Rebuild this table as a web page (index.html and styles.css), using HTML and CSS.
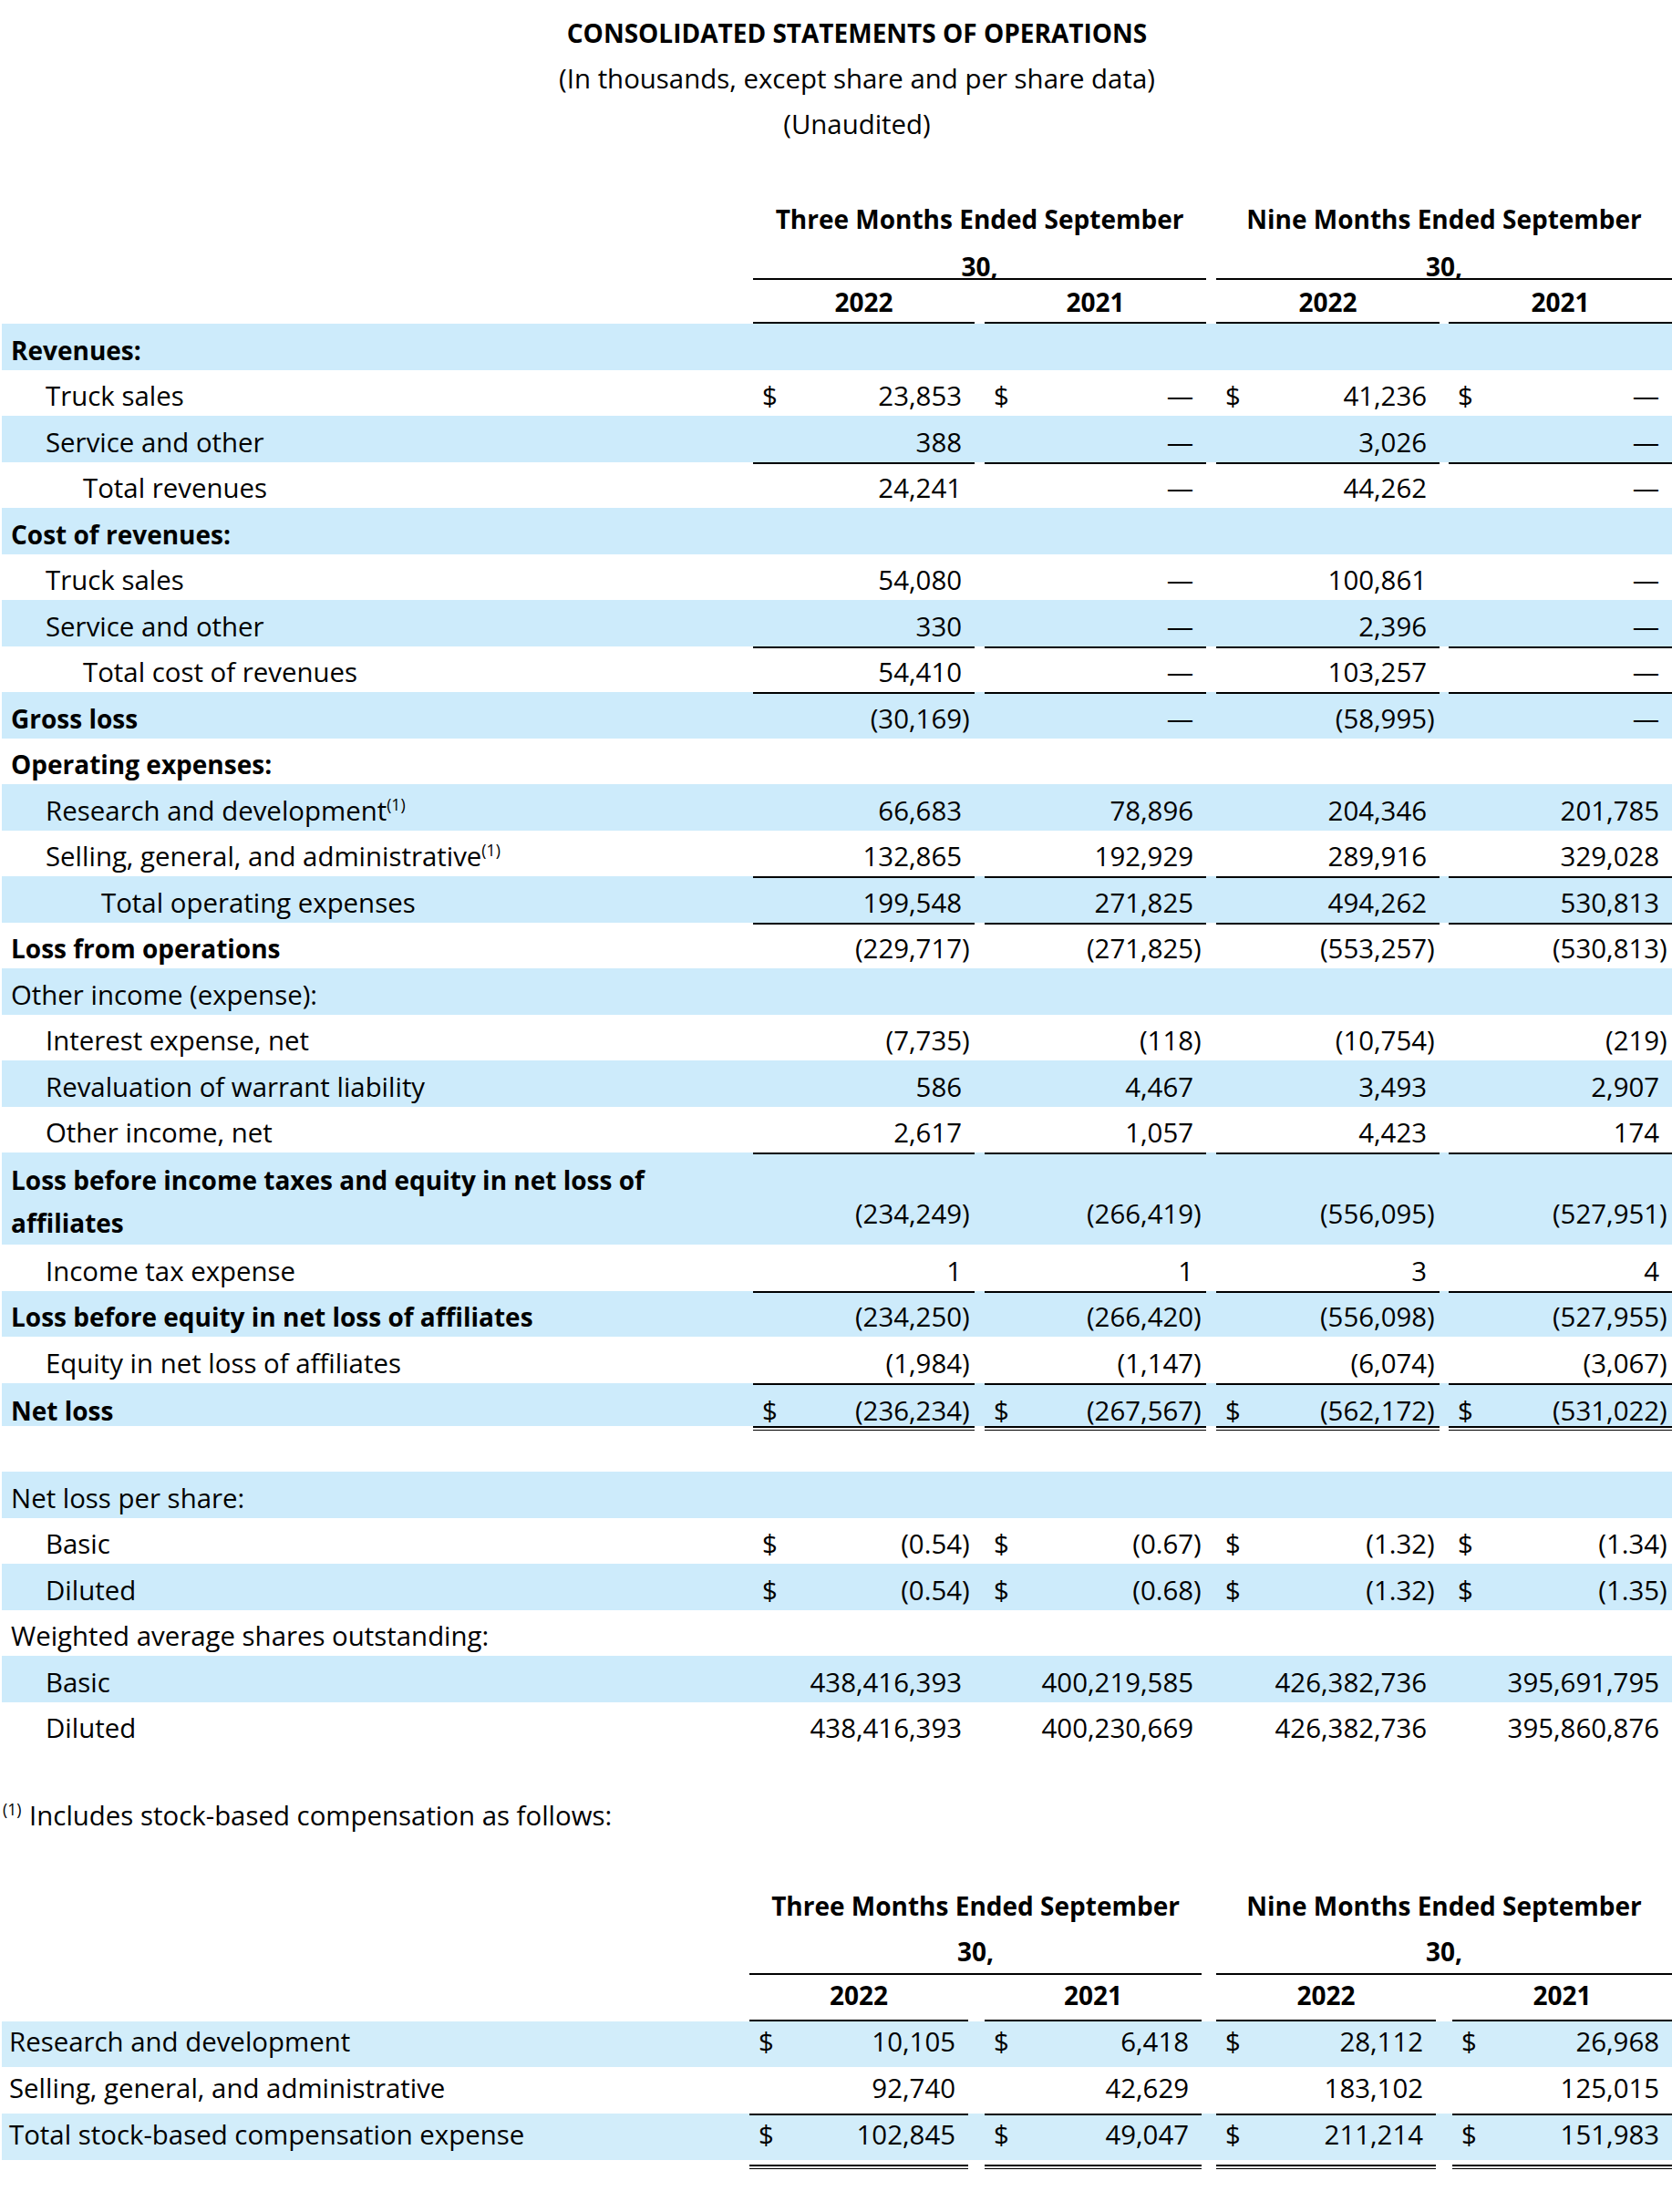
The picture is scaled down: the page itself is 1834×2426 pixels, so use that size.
FILE: index.html
```html
<!DOCTYPE html>
<html lang="en">
<head>
<meta charset="utf-8">
<title>Consolidated Statements of Operations</title>
<link rel="stylesheet" href="styles.css">
</head>
<body>
<div class="head">
  <div class="t">CONSOLIDATED STATEMENTS OF OPERATIONS</div>
  <div>(In thousands, except share and per share data)</div>
  <div>(Unaudited)</div>
</div>

<table class="fs">
  <colgroup>
    <col class="cl"><col class="c1"><col class="cg1"><col class="c2"><col class="cg2"><col class="c3"><col class="cg3"><col class="c4">
  </colgroup>
  <tr class="h1">
    <th></th>
    <th colspan="3" class="grp"><div class="clip">Three Months Ended September<br>30,</div></th>
    <th></th>
    <th colspan="3" class="grp"><div class="clip">Nine Months Ended September<br>30,</div></th>
  </tr>
  <tr class="yr">
    <th></th><th class="y">2022</th><th></th><th class="y">2021</th><th></th><th class="y">2022</th><th></th><th class="y">2021</th>
  </tr>
  <tr class="r b"><td class="l bold">Revenues:</td><td class="v"></td><td></td><td class="v"></td><td></td><td class="v"></td><td></td><td class="v"></td></tr>
  <tr class="r"><td class="l i1">Truck sales</td><td class="v"><span class="d">$</span>23,853</td><td></td><td class="v"><span class="d">$</span>—</td><td></td><td class="v"><span class="d">$</span>41,236</td><td></td><td class="v"><span class="d">$</span>—</td></tr>
  <tr class="r b"><td class="l i1">Service and other</td><td class="v">388</td><td></td><td class="v">—</td><td></td><td class="v">3,026</td><td></td><td class="v">—</td></tr>
  <tr class="r ln"><td class="l i2">Total revenues</td><td class="v">24,241</td><td></td><td class="v">—</td><td></td><td class="v">44,262</td><td></td><td class="v">—</td></tr>
  <tr class="r b"><td class="l bold">Cost of revenues:</td><td class="v"></td><td></td><td class="v"></td><td></td><td class="v"></td><td></td><td class="v"></td></tr>
  <tr class="r"><td class="l i1">Truck sales</td><td class="v">54,080</td><td></td><td class="v">—</td><td></td><td class="v">100,861</td><td></td><td class="v">—</td></tr>
  <tr class="r b"><td class="l i1">Service and other</td><td class="v">330</td><td></td><td class="v">—</td><td></td><td class="v">2,396</td><td></td><td class="v">—</td></tr>
  <tr class="r ln"><td class="l i2">Total cost of revenues</td><td class="v">54,410</td><td></td><td class="v">—</td><td></td><td class="v">103,257</td><td></td><td class="v">—</td></tr>
  <tr class="r b ln"><td class="l bold">Gross loss</td><td class="v">(30,169<span class="p">)</span></td><td></td><td class="v">—</td><td></td><td class="v">(58,995<span class="p">)</span></td><td></td><td class="v">—</td></tr>
  <tr class="r"><td class="l bold">Operating expenses:</td><td class="v"></td><td></td><td class="v"></td><td></td><td class="v"></td><td></td><td class="v"></td></tr>
  <tr class="r b"><td class="l i1">Research and development<sup>(1)</sup></td><td class="v">66,683</td><td></td><td class="v">78,896</td><td></td><td class="v">204,346</td><td></td><td class="v">201,785</td></tr>
  <tr class="r"><td class="l i1">Selling, general, and administrative<sup>(1)</sup></td><td class="v">132,865</td><td></td><td class="v">192,929</td><td></td><td class="v">289,916</td><td></td><td class="v">329,028</td></tr>
  <tr class="r b ln"><td class="l i3">Total operating expenses</td><td class="v">199,548</td><td></td><td class="v">271,825</td><td></td><td class="v">494,262</td><td></td><td class="v">530,813</td></tr>
  <tr class="r ln"><td class="l bold">Loss from operations</td><td class="v">(229,717<span class="p">)</span></td><td></td><td class="v">(271,825<span class="p">)</span></td><td></td><td class="v">(553,257<span class="p">)</span></td><td></td><td class="v">(530,813<span class="p">)</span></td></tr>
  <tr class="r b"><td class="l">Other income (expense):</td><td class="v"></td><td></td><td class="v"></td><td></td><td class="v"></td><td></td><td class="v"></td></tr>
  <tr class="r"><td class="l i1">Interest expense, net</td><td class="v">(7,735<span class="p">)</span></td><td></td><td class="v">(118<span class="p">)</span></td><td></td><td class="v">(10,754<span class="p">)</span></td><td></td><td class="v">(219<span class="p">)</span></td></tr>
  <tr class="r b"><td class="l i1">Revaluation of warrant liability</td><td class="v">586</td><td></td><td class="v">4,467</td><td></td><td class="v">3,493</td><td></td><td class="v">2,907</td></tr>
  <tr class="r"><td class="l i1">Other income, net</td><td class="v">2,617</td><td></td><td class="v">1,057</td><td></td><td class="v">4,423</td><td></td><td class="v">174</td></tr>
  <tr class="r2 b ln"><td class="l bold wrap">Loss before income taxes and equity in net loss of<br>affiliates</td><td class="v">(234,249<span class="p">)</span></td><td></td><td class="v">(266,419<span class="p">)</span></td><td></td><td class="v">(556,095<span class="p">)</span></td><td></td><td class="v">(527,951<span class="p">)</span></td></tr>
  <tr class="r"><td class="l i1">Income tax expense</td><td class="v">1</td><td></td><td class="v">1</td><td></td><td class="v">3</td><td></td><td class="v">4</td></tr>
  <tr class="r b ln"><td class="l bold">Loss before equity in net loss of affiliates</td><td class="v">(234,250<span class="p">)</span></td><td></td><td class="v">(266,420<span class="p">)</span></td><td></td><td class="v">(556,098<span class="p">)</span></td><td></td><td class="v">(527,955<span class="p">)</span></td></tr>
  <tr class="r"><td class="l i1">Equity in net loss of affiliates</td><td class="v">(1,984<span class="p">)</span></td><td></td><td class="v">(1,147<span class="p">)</span></td><td></td><td class="v">(6,074<span class="p">)</span></td><td></td><td class="v">(3,067<span class="p">)</span></td></tr>
  <tr class="net b ln"><td class="l bold">Net loss</td><td class="v"><span class="d">$</span>(236,234<span class="p">)</span></td><td></td><td class="v"><span class="d">$</span>(267,567<span class="p">)</span></td><td></td><td class="v"><span class="d">$</span>(562,172<span class="p">)</span></td><td></td><td class="v"><span class="d">$</span>(531,022<span class="p">)</span></td></tr>
  <tr class="dbl"><td></td><td class="v"></td><td></td><td class="v"></td><td></td><td class="v"></td><td></td><td class="v"></td></tr>
  <tr class="blank"><td></td><td></td><td></td><td></td><td></td><td></td><td></td><td></td></tr>
  <tr class="r b"><td class="l">Net loss per share:</td><td class="v"></td><td></td><td class="v"></td><td></td><td class="v"></td><td></td><td class="v"></td></tr>
  <tr class="r"><td class="l i1">Basic</td><td class="v"><span class="d">$</span>(0.54<span class="p">)</span></td><td></td><td class="v"><span class="d">$</span>(0.67<span class="p">)</span></td><td></td><td class="v"><span class="d">$</span>(1.32<span class="p">)</span></td><td></td><td class="v"><span class="d">$</span>(1.34<span class="p">)</span></td></tr>
  <tr class="r b"><td class="l i1">Diluted</td><td class="v"><span class="d">$</span>(0.54<span class="p">)</span></td><td></td><td class="v"><span class="d">$</span>(0.68<span class="p">)</span></td><td></td><td class="v"><span class="d">$</span>(1.32<span class="p">)</span></td><td></td><td class="v"><span class="d">$</span>(1.35<span class="p">)</span></td></tr>
  <tr class="r"><td class="l">Weighted average shares outstanding:</td><td class="v"></td><td></td><td class="v"></td><td></td><td class="v"></td><td></td><td class="v"></td></tr>
  <tr class="r b"><td class="l i1">Basic</td><td class="v">438,416,393</td><td></td><td class="v">400,219,585</td><td></td><td class="v">426,382,736</td><td></td><td class="v">395,691,795</td></tr>
  <tr class="r"><td class="l i1">Diluted</td><td class="v">438,416,393</td><td></td><td class="v">400,230,669</td><td></td><td class="v">426,382,736</td><td></td><td class="v">395,860,876</td></tr>
</table>

<p class="fn"><sup>(1)</sup> Includes stock-based compensation as follows:</p>

<table class="fs2">
  <colgroup>
    <col class="cl"><col class="c1"><col class="cg1"><col class="c2"><col class="cg2"><col class="c3"><col class="cg3"><col class="c4">
  </colgroup>
  <tr class="h1">
    <th></th>
    <th colspan="3" class="grp"><div class="hd">Three Months Ended September<br>30,</div></th>
    <th></th>
    <th colspan="3" class="grp"><div class="hd">Nine Months Ended September<br>30,</div></th>
  </tr>
  <tr class="yr">
    <th></th><th class="y">2022</th><th></th><th class="y">2021</th><th></th><th class="y">2022</th><th></th><th class="y">2021</th>
  </tr>
  <tr class="s1 b"><td class="l">Research and development</td><td class="v"><span class="d">$</span>10,105</td><td></td><td class="v"><span class="d">$</span>6,418</td><td></td><td class="v"><span class="d">$</span>28,112</td><td></td><td class="v"><span class="d">$</span>26,968</td></tr>
  <tr class="s2"><td class="l">Selling, general, and administrative</td><td class="v">92,740</td><td></td><td class="v">42,629</td><td></td><td class="v">183,102</td><td></td><td class="v">125,015</td></tr>
  <tr class="s2 b ln"><td class="l">Total stock-based compensation expense</td><td class="v"><span class="d">$</span>102,845</td><td></td><td class="v"><span class="d">$</span>49,047</td><td></td><td class="v"><span class="d">$</span>211,214</td><td></td><td class="v"><span class="d">$</span>151,983</td></tr>
  <tr class="gap"><td></td><td></td><td></td><td></td><td></td><td></td><td></td><td></td></tr>
  <tr class="dbl"><td></td><td class="v"></td><td></td><td class="v"></td><td></td><td class="v"></td><td></td><td class="v"></td></tr>
</table>
</body>
</html>
```
FILE: styles.css
```css
* { box-sizing: border-box; }

body {
  margin: 0;
  font-family: "Open Sans", "Liberation Sans", sans-serif;
  font-size: 29.4px;
  color: #000;
  background: #fff;
}

.head {
  margin-top: 11px;
  padding-left: 46px;
  text-align: center;
  line-height: 50px;
}
.head .t { font-weight: 700; font-size: 28px; }

table {
  border-collapse: separate;
  border-spacing: 0;
  table-layout: fixed;
  margin-left: 2px;
  width: 1832px;
}
td, th { padding: 0; white-space: nowrap; }
th { font-weight: 700; font-size: 28px; }

.bold { font-weight: 700; font-size: 28px; }

/* first statement */
.fs { margin-top: 53px; }
.fs .cl { width: 824px; }
.fs .c1 { width: 243px; }
.fs .cg1 { width: 11px; }
.fs .c2 { width: 243px; }
.fs .cg2 { width: 11px; }
.fs .c3 { width: 245px; }
.fs .cg3 { width: 10px; }
.fs .c4 { width: 245px; }

.h1 th { vertical-align: top; text-align: center; }
.fs .h1 { height: 93px; }
.fs .clip { height: 91px; line-height: 52px; }
.grp {
  background: linear-gradient(#000, #000) bottom / 100% 2px no-repeat;
}

.yr th { vertical-align: bottom; line-height: 44px; }
.fs .yr { height: 48px; }
.fs .yr th { padding-bottom: 2px; }
.y { background: linear-gradient(#000, #000) bottom / 100% 2px no-repeat; }

td { vertical-align: bottom; line-height: 44px; }
.fs tr.r { height: 50.5px; }
.fs tr.r2 { height: 101px; }
.fs tr.r2 td.l { line-height: 47px; }
.fs tr.r2 td.v { padding-bottom: 12px; }
.fs tr.net { height: 47.5px; }
.fs tr.net td { line-height: 34px; }
.fs tr.blank { height: 44px; }

td.l { padding-left: 10px; }
td.l.i1 { padding-left: 48px; }
td.l.i2 { padding-left: 89px; }
td.l.i3 { padding-left: 109px; }

td.v { text-align: right; padding-left: 10px; padding-right: 14px; }
.d { float: left; }
.p { margin-right: -0.296em; }

tr.b { background-color: #cdebfb; }
tr.ln td.v { background: linear-gradient(#000, #000) top / 100% 2px no-repeat; }

tr.dbl { height: 6px; }
tr.dbl td { line-height: 0; font-size: 0; height: 6px; }
tr.dbl td.v {
  background: linear-gradient(#000 0 1.8px, transparent 1.8px 3.6px, #000 3.6px 5.4px, transparent 5.4px) top / 100% 6px no-repeat;
}

sup {
  font-size: 0.6em;
  line-height: 0;
  vertical-align: 0.62em;
}

/* footnote */
.fn {
  margin: 52px 0 0 3px;
  line-height: 44px;
  height: 44px;
}
.fn sup { margin-right: 1px; }

/* stock comp table */
.fs2 { margin-top: 52px; }
.fs2 .cl { width: 820px; }
.fs2 .c1 { width: 240px; }
.fs2 .cg1 { width: 18px; }
.fs2 .c2 { width: 238px; }
.fs2 .cg2 { width: 16px; }
.fs2 .c3 { width: 241px; }
.fs2 .cg3 { width: 18px; }
.fs2 .c4 { width: 241px; }

.fs2 .h1 { height: 101px; }
.fs2 .hd { line-height: 50px; }
.fs2 .yr { height: 50px; }
.fs2 .yr th { padding-bottom: 7px; }
.fs2 td.l { padding-left: 8px; }
.fs2 tr.s1 { height: 49px; }
.fs2 tr.s2 { height: 51px; }
.fs2 tr.s1 td, .fs2 tr.s2 td { padding-bottom: 6px; }
.fs2 tr.b { background-color: #d2edfa; }
.fs2 tr.gap { height: 5px; }
.fs2 tr.gap td { line-height: 0; font-size: 0; height: 5px; }
```
